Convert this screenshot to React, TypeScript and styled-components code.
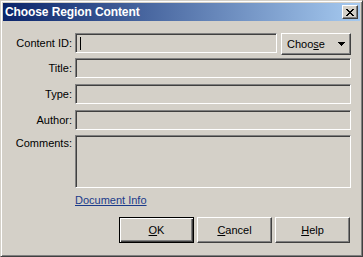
import styled, { createGlobalStyle } from 'styled-components';

const GlobalStyle = createGlobalStyle`
  html, body {
    margin: 0;
    padding: 0;
    background: #d4d0c8;
  }
  body {
    font-family: "Liberation Sans", Arial, sans-serif;
    font-size: 11px;
    color: #000;
  }
`;

const Window = styled.div`
  width: 363px;
  height: 257px;
  box-sizing: border-box;
  background: #d4d0c8;
  border: 1px solid;
  border-color: #d4d0c8 #404040 #404040 #d4d0c8;
  box-shadow: inset 1px 1px #fff, inset -1px -1px #808080;
  padding: 2px;
  display: flex;
  flex-direction: column;
`;

const TitleBar = styled.div`
  height: 18px;
  flex: none;
  display: flex;
  align-items: center;
  justify-content: space-between;
  padding: 0 2px 0 2px;
  background: linear-gradient(to right, #0a246a, #a6caf0);
  color: #fff;
  font-weight: bold;
  font-size: 12px;
  letter-spacing: -0.1px;
`;

const TitleText = styled.span`
  white-space: nowrap;
`;

const CloseButton = styled.div`
  width: 16px;
  height: 14px;
  box-sizing: border-box;
  background: #d4d0c8;
  border: 1px solid;
  border-color: #fff #404040 #404040 #fff;
  box-shadow: inset -1px -1px #808080, inset 1px 1px #d4d0c8;
  display: flex;
  align-items: center;
  justify-content: center;
`;

const Body = styled.div`
  flex: 1;
  display: flex;
  flex-direction: column;
  padding: 12px 9px 11px 10px;
`;

const FieldGrid = styled.div`
  display: grid;
  grid-template-columns: 59px 276px;
  grid-template-rows: 19px 20px 20px 20px 53px auto;
  column-gap: 3px;
  row-gap: 6px;
`;

const Label = styled.label<{ $top?: boolean }>`
  text-align: right;
  white-space: nowrap;
  align-self: ${(p) => (p.$top ? 'start' : 'center')};
  padding-top: ${(p) => (p.$top ? '1px' : '0')};
`;

const IdRow = styled.div`
  display: flex;
  gap: 4px;
  align-items: flex-start;
`;

const Field = styled.div<{ $h?: number }>`
  height: ${(p) => p.$h ?? 20}px;
  flex: 1;
  box-sizing: border-box;
  background: #d4d0c8;
  border: 1px solid;
  border-color: #808080 #fff #fff #808080;
  box-shadow: inset 1px 1px #404040, inset -1px -1px #d4d0c8;
  display: flex;
  align-items: center;
  padding-left: 4px;
`;

const CommentsField = styled(Field)`
  margin-top: -1px;
`;

const Caret = styled.span`
  width: 1px;
  height: 13px;
  background: #000;
`;

const Button = styled.div<{ $default?: boolean; $w?: number; $h?: number }>`
  width: ${(p) => p.$w ?? 75}px;
  height: ${(p) => p.$h ?? 26}px;
  flex: none;
  box-sizing: border-box;
  background: #d4d0c8;
  display: flex;
  align-items: center;
  justify-content: center;
  gap: 13px;
  border: 1px solid;
  border-color: ${(p) => (p.$default ? '#000' : '#fff #404040 #404040 #fff')};
  box-shadow: ${(p) =>
    p.$default
      ? 'inset 1px 1px #fff, inset -1px -1px #404040, inset -2px -2px #808080'
      : 'inset -1px -1px #808080, inset 1px 1px #d4d0c8'};
`;

const Key = styled.span`
  text-decoration: underline;
`;

const DocLink = styled.a`
  grid-column: 2;
  color: #1a3a8a;
  text-decoration: underline;
  justify-self: start;
  margin-top: -1px;
`;

const ButtonRow = styled.div`
  margin-top: auto;
  display: flex;
  justify-content: flex-end;
  gap: 3px;
  padding-right: 1px;
`;

const CloseGlyph = () => (
  <svg width="8" height="7" viewBox="0 0 8 7" shapeRendering="crispEdges">
    <path
      d="M0 0h2v1H0zM6 0h2v1H6zM1 1h2v1H1zM5 1h2v1H5zM2 2h4v1H2zM3 3h2v1H3zM2 4h4v1H2zM1 5h2v1H1zM5 5h2v1H5zM0 6h2v1H0zM6 6h2v1H6z"
      fill="#000"
    />
  </svg>
);

const DownArrow = () => (
  <svg width="7" height="4" viewBox="0 0 7 4" shapeRendering="crispEdges">
    <path d="M0 0h7v1H0zM1 1h5v1H1zM2 2h3v1H2zM3 3h1v1H3z" fill="#000" />
  </svg>
);

export default function App() {
  return (
    <>
      <GlobalStyle />
      <Window>
        <TitleBar>
          <TitleText>Choose Region Content</TitleText>
          <CloseButton>
            <CloseGlyph />
          </CloseButton>
        </TitleBar>
        <Body>
          <FieldGrid>
            <Label>Content ID:</Label>
            <IdRow>
              <Field>
                <Caret />
              </Field>
              <Button $w={70} $h={22}>
                <span>
                  Choo<Key>s</Key>e
                </span>
                <DownArrow />
              </Button>
            </IdRow>
            <Label>Title:</Label>
            <Field />
            <Label>Type:</Label>
            <Field />
            <Label>Author:</Label>
            <Field />
            <Label $top>Comments:</Label>
            <CommentsField $h={53} />
            <DocLink>Document Info</DocLink>
          </FieldGrid>
          <ButtonRow>
            <Button $default>
              <span>
                <Key>O</Key>K
              </span>
            </Button>
            <Button>
              <span>
                <Key>C</Key>ancel
              </span>
            </Button>
            <Button>
              <span>
                <Key>H</Key>elp
              </span>
            </Button>
          </ButtonRow>
        </Body>
      </Window>
    </>
  );
}
